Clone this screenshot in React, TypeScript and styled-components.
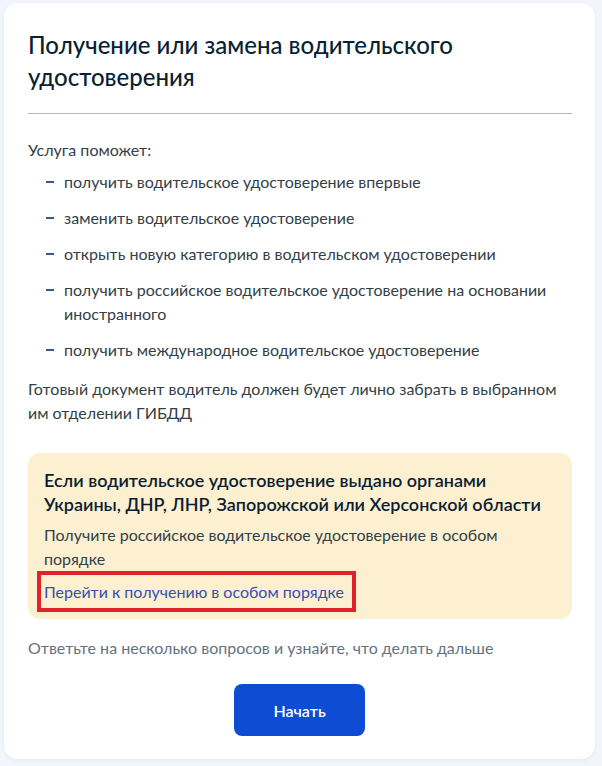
import styled, { createGlobalStyle } from 'styled-components'

const GlobalStyle = createGlobalStyle`
  html, body {
    margin: 0;
    padding: 0;
    background: #f2f5fb;
  }
  body {
    font-family: Lato, 'Noto Sans', sans-serif;
    color: #0b1f33;
  }
`

const Page = styled.div`
  padding: 3px 7px 8px 4px;
`

const Card = styled.div`
  background: #ffffff;
  border-radius: 14px;
  box-shadow: 0 1px 4px rgba(11, 31, 51, 0.06);
  padding: 26px 23px 23px 24px;
`

const Title = styled.h1`
  margin: 0;
  font-size: 24px;
  line-height: 32px;
  font-weight: 500;
  color: #0b1f33;
`

const Divider = styled.hr`
  border: none;
  border-top: 1px solid #b0b8c1;
  margin: 20px 0 24px;
`

const Text = styled.p<{ muted?: boolean }>`
  margin: 0;
  font-size: 16px;
  line-height: 24px;
  color: ${({ muted }) => (muted ? '#66727f' : '#333f48')};
`

const List = styled.ul`
  list-style: none;
  margin: 8px 0 15px;
  padding: 0;
  display: flex;
  flex-direction: column;
  gap: 12px;
`

const Item = styled.li`
  display: flex;
  font-size: 16px;
  line-height: 24px;
  color: #333f48;
  padding-left: 18px;

  &::before {
    content: '';
    flex: none;
    width: 8px;
    height: 2px;
    margin: 11px 10px 0 0;
    background: #3c5a8a;
  }
`

const Notice = styled.div`
  margin: 28px 0 0;
  background: #fdf0d1;
  border-radius: 12px;
  padding: 15px 16px 7px;
`

const NoticeTitle = styled.div`
  font-size: 18px;
  line-height: 24px;
  font-weight: 600;
  color: #0b1f33;
  margin-bottom: 7px;
`

const LinkBox = styled.div`
  display: inline-block;
  margin: 0 0 0 -7px;
  border: 4px solid #e3212b;
  padding: 5px 8px 4px 3px;
`

const Link = styled.a`
  display: block;
  font-size: 16px;
  line-height: 24px;
  color: #3451b2;
  text-decoration: none;
`

const Hint = styled(Text)`
  margin-top: 17px;
`

const Actions = styled.div`
  display: flex;
  justify-content: center;
  margin-top: 24px;
  padding-right: 1px;
`

const Button = styled.button`
  width: 131px;
  height: 52px;
  border: none;
  border-radius: 8px;
  background: #0d4cd3;
  color: #ffffff;
  font-family: Lato, 'Noto Sans', sans-serif;
  font-size: 16px;
  font-weight: 600;
  cursor: pointer;
`

const items = [
  'получить водительское удостоверение впервые',
  'заменить водительское удостоверение',
  'открыть новую категорию в водительском удостоверении',
  'получить российское водительское удостоверение на основании иностранного',
  'получить международное водительское удостоверение',
]

export default function App() {
  return (
    <>
      <GlobalStyle />
      <Page>
        <Card>
          <Title>
            Получение или замена водительского
            <br />
            удостоверения
          </Title>
          <Divider />
          <Text>Услуга поможет:</Text>
          <List>
            {items.map((item) => (
              <Item key={item}>{item}</Item>
            ))}
          </List>
          <Text>
            Готовый документ водитель должен будет лично забрать в выбранном им отделении ГИБДД
          </Text>
          <Notice>
            <NoticeTitle>
              Если водительское удостоверение выдано органами Украины, ДНР, ЛНР, Запорожской или
              Херсонской области
            </NoticeTitle>
            <Text>Получите российское водительское удостоверение в особом порядке</Text>
            <LinkBox>
              <Link href="#">Перейти к получению в особом порядке</Link>
            </LinkBox>
          </Notice>
          <Hint muted>Ответьте на несколько вопросов и узнайте, что делать дальше</Hint>
          <Actions>
            <Button>Начать</Button>
          </Actions>
        </Card>
      </Page>
    </>
  )
}
